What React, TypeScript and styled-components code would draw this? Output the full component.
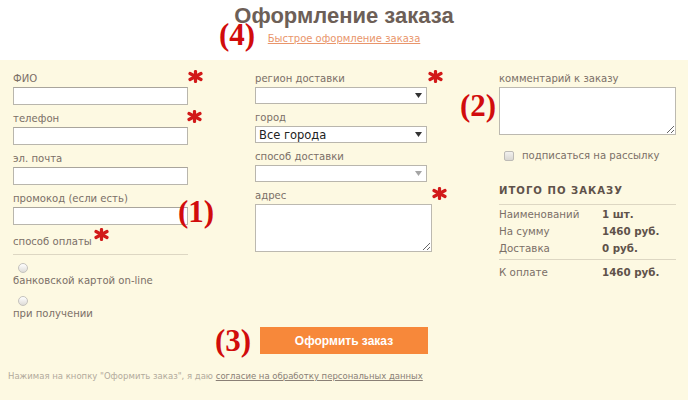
import React from "react";
import styled, { createGlobalStyle } from "styled-components";

const GlobalStyle = createGlobalStyle`
  html, body {
    margin: 0;
    padding: 0;
    background: #ffffff;
  }
  body {
    font-family: "DejaVu Sans", Verdana, sans-serif;
  }
`;

const Page = styled.div`
  position: relative;
  width: 688px;
  height: 400px;
  overflow: hidden;
`;

const Header = styled.div`
  height: 60px;
  display: flex;
  flex-direction: column;
  align-items: center;
  padding-top: 3px;
  box-sizing: border-box;
`;

const Title = styled.h1`
  margin: 0;
  font-family: "Liberation Sans", Arial, sans-serif;
  font-weight: bold;
  font-size: 22px;
  line-height: 26px;
  color: #6d5f57;
`;

const QuickLink = styled.a`
  margin-top: 3px;
  font-size: 10px;
  line-height: 14px;
  color: #e9956b;
  text-decoration: underline;
`;

const Panel = styled.div`
  background: #fdf9e2;
  height: 340px;
  padding: 12px 0 0 13px;
  box-sizing: border-box;
`;

const Columns = styled.div`
  display: grid;
  grid-template-columns: 175px 177px 177px;
  column-gap: 67px;
  row-gap: 6px;
`;

const Column = styled.div`
  display: flex;
  flex-direction: column;
`;

const Field = styled.div<{ $narrow?: boolean }>`
  position: relative;
  display: flex;
  flex-direction: column;
  width: ${(p) => (p.$narrow ? "172px" : "100%")};
  margin-bottom: 7px;
`;

const Label = styled.label`
  font-size: 10.1px;
  line-height: 14px;
  color: #7b6f67;
  margin-bottom: 1px;
  white-space: nowrap;
`;

const TextInput = styled.input`
  box-sizing: border-box;
  width: 100%;
  height: 18px;
  margin: 0;
  border: 1px solid #b9b6ad;
  border-top-color: #a9a59c;
  background: #ffffff;
  outline: none;
`;

const SelectBox = styled.div`
  box-sizing: border-box;
  height: 17px;
  display: flex;
  align-items: center;
  justify-content: space-between;
  padding: 0 4px 0 3px;
  border: 1px solid #b9b6ad;
  background: #ffffff;
`;

const SelectValue = styled.span`
  font-size: 11.5px;
  line-height: 14px;
  color: #222222;
`;

const TextArea = styled.textarea`
  box-sizing: border-box;
  width: 100%;
  height: 48px;
  margin: 0;
  border: 1px solid #bcb9b0;
  background: #ffffff;
  resize: both;
  outline: none;
`;

const Required = styled.span<{ $right: number; $top: number }>`
  position: absolute;
  right: ${(p) => p.$right}px;
  top: ${(p) => p.$top}px;
  line-height: 0;
`;

const InlineRequired = styled.span`
  display: inline-block;
  margin-left: 2px;
  vertical-align: 4px;
  line-height: 0;
`;

const PayHeading = styled.div`
  width: 175px;
  margin-top: -4px;
  padding-bottom: 5px;
  border-bottom: 1px solid #ddd7c3;
  font-size: 10.1px;
  line-height: 14px;
  color: #7b6f67;
`;

const RadioDot = styled.span`
  display: block;
  width: 10px;
  height: 10px;
  margin: 8px 0 0 5px;
  border-radius: 50%;
  border: 1px solid #c4c2bd;
  box-sizing: border-box;
  background: linear-gradient(#ffffff, #dedcd7);
`;

const RadioText = styled.div`
  margin-top: 1px;
  font-size: 10.1px;
  line-height: 14px;
  color: #7b6f67;
`;

const CheckRow = styled.div`
  display: flex;
  align-items: center;
  gap: 8px;
  margin: 8px 0 0 5px;
  font-size: 10.1px;
  line-height: 12px;
  color: #7b6f67;
`;

const CheckBox = styled.span`
  width: 10px;
  height: 10px;
  border-radius: 2px;
  border: 1px solid #bdbbb6;
  box-sizing: border-box;
  background: linear-gradient(#f2f1ee, #d9d7d2);
`;

const SummaryTitle = styled.div`
  margin-top: 22px;
  padding-bottom: 6px;
  border-bottom: 1px solid #ddd7c3;
  font-size: 10.1px;
  line-height: 14px;
  font-weight: bold;
  letter-spacing: 1px;
  color: #5f524a;
`;

const SummaryList = styled.div<{ $line?: boolean }>`
  padding: ${(p) => (p.$line ? "4px 0 0" : "1px 0 2px")};
  border-bottom: ${(p) => (p.$line ? "none" : "1px solid #ddd7c3")};
`;

const SummaryRow = styled.div`
  display: grid;
  grid-template-columns: 103px 1fr;
  font-size: 10.3px;
  line-height: 17px;
  color: #7b6f67;
`;

const SummaryValue = styled.span`
  font-weight: bold;
  color: #5f524a;
`;

const SubmitButton = styled.button`
  grid-column: 2;
  margin-left: 5px;
  width: 168px;
  height: 27px;
  border: none;
  background: #f7883a;
  color: #ffffff;
  font-family: "Liberation Sans", Arial, sans-serif;
  font-weight: bold;
  font-size: 12px;
  cursor: pointer;
`;

const Consent = styled.div`
  margin: 16px 0 0 -5px;
  font-size: 8.5px;
  line-height: 12px;
  color: #b2aa9c;
  white-space: nowrap;
`;

const ConsentLink = styled.a`
  color: #8a8076;
  text-decoration: underline;
`;

const Annotation = styled.span<{ $x: number; $y: number }>`
  position: absolute;
  left: ${(p) => p.$x}px;
  top: ${(p) => p.$y}px;
  font-family: "Liberation Serif", "Times New Roman", serif;
  font-weight: bold;
  font-size: 31px;
  line-height: 34px;
  color: #d10c0c;
`;

function Star() {
  return (
    <svg width="15" height="13" viewBox="0 0 15 13">
      <g stroke="#d21a1a" strokeWidth="3.2" strokeLinecap="round">
        <line x1="7.5" y1="1.5" x2="7.5" y2="11.5" />
        <line x1="2" y1="3.5" x2="13" y2="9.5" />
        <line x1="2" y1="9.5" x2="13" y2="3.5" />
      </g>
    </svg>
  );
}

function Arrow({ muted }: { muted?: boolean }) {
  return (
    <svg width="7" height="5" viewBox="0 0 7 5">
      <path d="M0 0 H7 L3.5 5 Z" fill={muted ? "#a5a5a5" : "#333333"} />
    </svg>
  );
}

const summary = [
  { name: "Наименований", value: "1 шт." },
  { name: "На сумму", value: "1460 руб." },
  { name: "Доставка", value: "0 руб." },
];

export default function App(): React.ReactElement {
  return (
    <Page>
      <GlobalStyle />
      <Header>
        <Title>Оформление заказа</Title>
        <QuickLink href="#">Быстрое оформление заказа</QuickLink>
      </Header>
      <Panel>
        <Columns>
          <Column>
            <Field>
              <Label>ФИО</Label>
              <TextInput />
              <Required $right={-15} $top={-2}>
                <Star />
              </Required>
            </Field>
            <Field>
              <Label>телефон</Label>
              <TextInput />
              <Required $right={-14} $top={-2}>
                <Star />
              </Required>
            </Field>
            <Field>
              <Label>эл. почта</Label>
              <TextInput />
            </Field>
            <Field>
              <Label>промокод (если есть)</Label>
              <TextInput />
            </Field>
            <PayHeading>
              способ оплаты
              <InlineRequired>
                <Star />
              </InlineRequired>
            </PayHeading>
            <RadioDot />
            <RadioText>банковской картой on-line</RadioText>
            <RadioDot />
            <RadioText>при получении</RadioText>
          </Column>

          <Column>
            <Field $narrow>
              <Label>регион доставки</Label>
              <SelectBox>
                <SelectValue />
                <Arrow />
              </SelectBox>
              <Required $right={-16} $top={-2}>
                <Star />
              </Required>
            </Field>
            <Field $narrow>
              <Label>город</Label>
              <SelectBox>
                <SelectValue>Все города</SelectValue>
                <Arrow />
              </SelectBox>
            </Field>
            <Field $narrow>
              <Label>способ доставки</Label>
              <SelectBox>
                <SelectValue />
                <Arrow muted />
              </SelectBox>
            </Field>
            <Field>
              <Label>адрес</Label>
              <TextArea />
              <Required $right={-15} $top={-2}>
                <Star />
              </Required>
            </Field>
          </Column>

          <Column>
            <Field>
              <Label>комментарий к заказу</Label>
              <TextArea />
            </Field>
            <CheckRow>
              <CheckBox />
              подписаться на рассылку
            </CheckRow>
            <SummaryTitle>ИТОГО ПО ЗАКАЗУ</SummaryTitle>
            <SummaryList>
              {summary.map((row) => (
                <SummaryRow key={row.name}>
                  <span>{row.name}</span>
                  <SummaryValue>{row.value}</SummaryValue>
                </SummaryRow>
              ))}
            </SummaryList>
            <SummaryList $line>
              <SummaryRow>
                <span>К оплате</span>
                <SummaryValue>1460 руб.</SummaryValue>
              </SummaryRow>
            </SummaryList>
          </Column>

          <SubmitButton>Оформить заказ</SubmitButton>
        </Columns>
        <Consent>
          Нажимая на кнопку "Оформить заказ", я даю{" "}
          <ConsentLink href="#">согласие на обработку персональных данных</ConsentLink>
        </Consent>
      </Panel>

      <Annotation $x={219} $y={18}>(4)</Annotation>
      <Annotation $x={178} $y={195}>(1)</Annotation>
      <Annotation $x={460} $y={89}>(2)</Annotation>
      <Annotation $x={215} $y={324}>(3)</Annotation>
    </Page>
  );
}
